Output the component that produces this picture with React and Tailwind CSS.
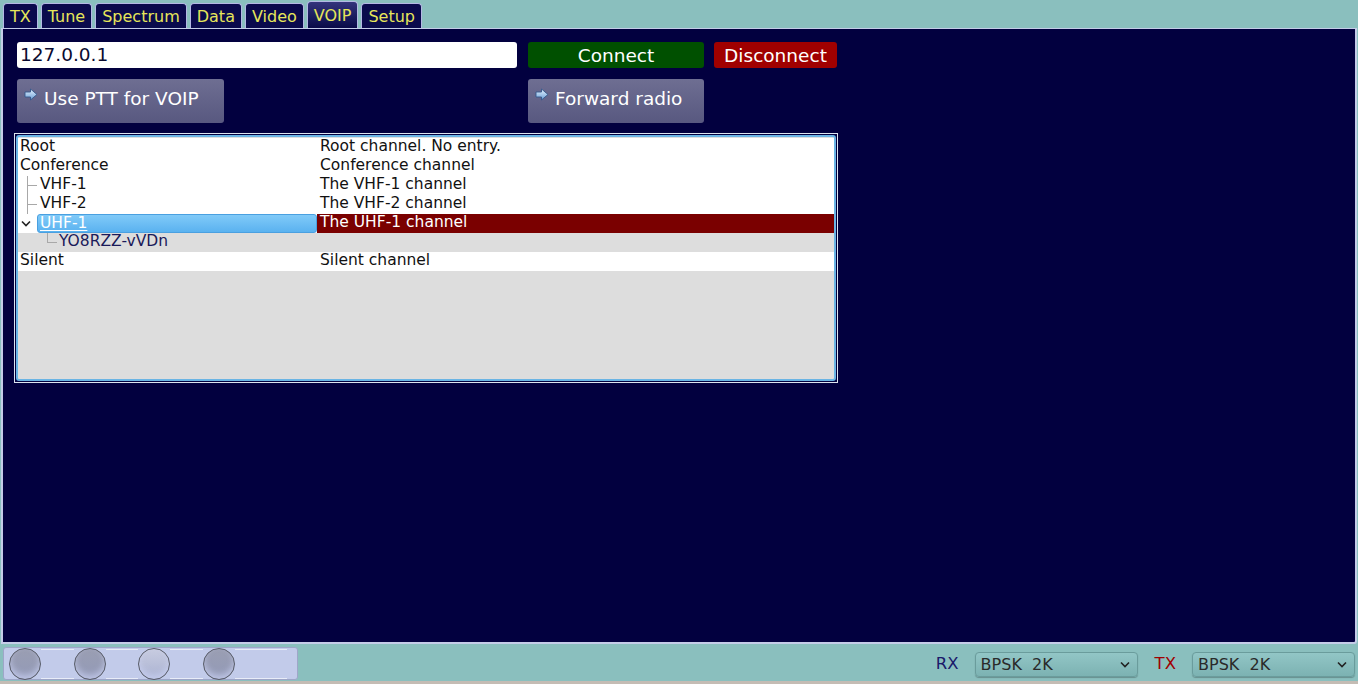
import React from 'react';

const font = { fontFamily: '"DejaVu Sans", "Liberation Sans", sans-serif' };

const tabs = ['TX', 'Tune', 'Spectrum', 'Data', 'Video', 'VOIP', 'Setup'];

const Arrow = () => (
    <svg width="14" height="13" viewBox="0 0 14 13" className="shrink-0">
        <defs>
            <linearGradient id="ag" x1="0" y1="0" x2="0" y2="1">
                <stop offset="0" stopColor="#e4f2ff" />
                <stop offset="1" stopColor="#6a9ed6" />
            </linearGradient>
        </defs>
        <path d="M1 4 H6.5 V1 L13 6.5 L6.5 12 V9 H1 Z" fill="url(#ag)" stroke="#33578a" strokeWidth="0.9" />
    </svg>
);

const Chevron = () => (
    <svg width="10" height="7" viewBox="0 0 10 7">
        <path d="M1 1.5 L5 5.5 L9 1.5" fill="none" stroke="#222" strokeWidth="1.6" />
    </svg>
);

const rows = [
    { name: 'Root', desc: 'Root channel. No entry.', level: 0 },
    { name: 'Conference', desc: 'Conference channel', level: 0 },
    { name: 'VHF-1', desc: 'The VHF-1 channel', level: 1 },
    { name: 'VHF-2', desc: 'The VHF-2 channel', level: 1 },
    { name: 'UHF-1', desc: 'The UHF-1 channel', level: 1, selected: true },
    { name: 'YO8RZZ-vVDn', desc: '', level: 2, user: true },
    { name: 'Silent', desc: 'Silent channel', level: 0 },
];

const TreeRow = ({ row }) => {
    const bg = row.user ? 'bg-[#dddddd]' : 'bg-white';
    return (
        <div className={`flex h-[19px] text-[15.5px] leading-[16px] ${bg}`}>
            <div className="flex w-[299px]">
                {row.level === 1 && !row.selected && (
                    <div className="ml-[9px] flex h-full w-[11px] items-center">
                        <div className="h-full w-px bg-[#a8a8a8]" />
                        <div className="h-px w-[9px] bg-[#a8a8a8]" />
                    </div>
                )}
                {row.selected && (
                    <div className="ml-[3px] flex h-full w-[16px] items-center">
                        <Chevron />
                    </div>
                )}
                {row.level === 2 && (
                    <div className="ml-[29px] flex h-full w-[11px] items-start">
                        <div className="h-[10px] w-px bg-[#a8a8a8]" />
                        <div className="mt-[9px] h-px w-[9px] bg-[#a8a8a8]" />
                    </div>
                )}
                <div
                    className={
                        row.selected
                            ? 'h-full flex-1 rounded-[3px] border border-[#4aa0e0] bg-gradient-to-b from-[#80caf8] to-[#5ab2f0] pl-[2px] text-white underline decoration-1 underline-offset-[2px]'
                            : row.user
                              ? 'pl-[1px] text-[#1a1a5a]'
                              : 'pl-[2px] text-[#111]'
                    }
                >
                    {row.name}
                </div>
            </div>
            <div className={`flex-1 pl-[3px] ${row.selected ? 'bg-[#7a0000] text-white' : 'text-[#111]'}`}>{row.desc}</div>
        </div>
    );
};

const RoundBtn = ({ light }) => (
    <div
        className={`h-[32px] w-[32px] shrink-0 rounded-full border border-[#585c68] shadow-[inset_0_-4px_6px_rgba(205,212,245,0.7)] ${
            light ? 'bg-gradient-to-b from-[#c8cce0] to-[#aab2d2]' : 'bg-gradient-to-b from-[#9a9eb2] to-[#939ab8]'
        }`}
    />
);

const Combo = () => (
    <div className="flex h-[25px] w-[163px] items-center justify-between rounded-[4px] border border-[#6a9c9c] bg-gradient-to-b from-[#92c6c6] to-[#7cb2b2] pl-[5px] pr-[7px] text-[16px] text-[#2a2a2a] shadow-[0_1px_1px_rgba(0,0,0,0.25)]">
        <span className="whitespace-pre">BPSK  2K</span>
        <Chevron />
    </div>
);

const App = () => {
    return (
        <div className="flex h-[684px] w-[1358px] flex-col overflow-hidden bg-[#8abfbe]" style={font}>
            {/* tab bar */}
            <div className="flex h-[28px] items-end gap-[3px] pl-[3px]">
                {tabs.map((t) => (
                    <div
                        key={t}
                        className={`flex items-center justify-center rounded-t-[4px] border border-b-0 border-[#b4b8e4] px-[6px] text-[16px] text-[#e6e65a] ${
                            t === 'VOIP'
                                ? 'h-[27px] bg-gradient-to-b from-[#34347c] to-[#0a0a48] pt-[1px]'
                                : 'h-[25px] bg-[#0a0a4c] pt-[2px]'
                        }`}
                    >
                        {t}
                    </div>
                ))}
            </div>

            {/* main panel */}
            <div className="mx-[1px] h-[616px] rounded-br-[3px] border-2 border-t border-[#c4cce8] bg-[#02003f] pl-[13px] pt-[13px]">
                <div className="flex items-start gap-[11px] pl-[1px]">
                    <div className="flex h-[26px] w-[500px] items-center rounded-[3px] bg-white pl-[3px] text-[18.5px] text-[#0a0a30]">
                        127.0.0.1
                    </div>
                    <div className="flex h-[26px] w-[176px] items-center justify-center rounded-[3px] bg-[#005000] pt-[1px] text-[18.5px] text-white">
                        Connect
                    </div>
                    <div className="ml-[-1px] flex h-[26px] w-[123px] items-center justify-center rounded-[3px] bg-[#a00000] pt-[1px] text-[18.5px] text-white">
                        Disconnect
                    </div>
                </div>

                <div className="mt-[11px] flex gap-[304px] pl-[1px]">
                    <div className="flex h-[44px] w-[207px] items-start gap-[6px] rounded-[3px] bg-gradient-to-b from-[#6e6e92] to-[#585880] pl-[7px] pt-[6px] text-[18.5px] text-white">
                        <div className="pt-[3px]">
                            <Arrow />
                        </div>
                        <span>Use PTT for VOIP</span>
                    </div>
                    <div className="flex h-[44px] w-[176px] items-start gap-[6px] rounded-[3px] bg-gradient-to-b from-[#6e6e92] to-[#585880] pl-[7px] pt-[6px] text-[18.5px] text-white">
                        <div className="pt-[3px]">
                            <Arrow />
                        </div>
                        <span>Forward radio</span>
                    </div>
                </div>

                {/* channel tree */}
                <div className="ml-[-2px] mt-[10px] w-[824px] border border-[#dde4f0] p-px">
                    <div className="h-[246px] rounded-[3px] border-2 border-[#6ab4e4] bg-[#dddddd] pt-px">
                        {rows.map((r) => (
                            <TreeRow key={r.name} row={r} />
                        ))}
                    </div>
                </div>
            </div>

            {/* bottom bar */}
            <div className="flex flex-1 items-start pt-[2px]">
                <div className="ml-[3px] mt-[1px] flex h-[33px] w-[295px] items-center rounded-[3px] border border-[#9ea6c8] bg-[#c2cbea] pl-[5px]">
                    <div className="flex items-center">
                        <RoundBtn />
                        <div className="h-[30px] w-[33px] border-y border-[#e8ecf8]" />
                        <RoundBtn />
                        <div className="h-[30px] w-[32px] border-y border-[#e8ecf8]" />
                        <RoundBtn light />
                        <div className="h-[30px] w-[33px] border-y border-[#e8ecf8]" />
                        <RoundBtn />
                        <div className="h-[30px] w-[52px] border-y border-[#e8ecf8]" />
                    </div>
                </div>
                <div className="ml-auto mt-[6px] flex items-center">
                    <span className="mr-[16px] text-[16.5px] text-[#1a1a6a]">RX</span>
                    <Combo />
                    <span className="ml-[17px] mr-[16px] text-[16.5px] text-[#a00000]">TX</span>
                    <Combo />
                    <div className="w-[3px]" />
                </div>
            </div>
            <div className="h-[3px] bg-[#c4bcb4]" />
        </div>
    );
};

export default App;
